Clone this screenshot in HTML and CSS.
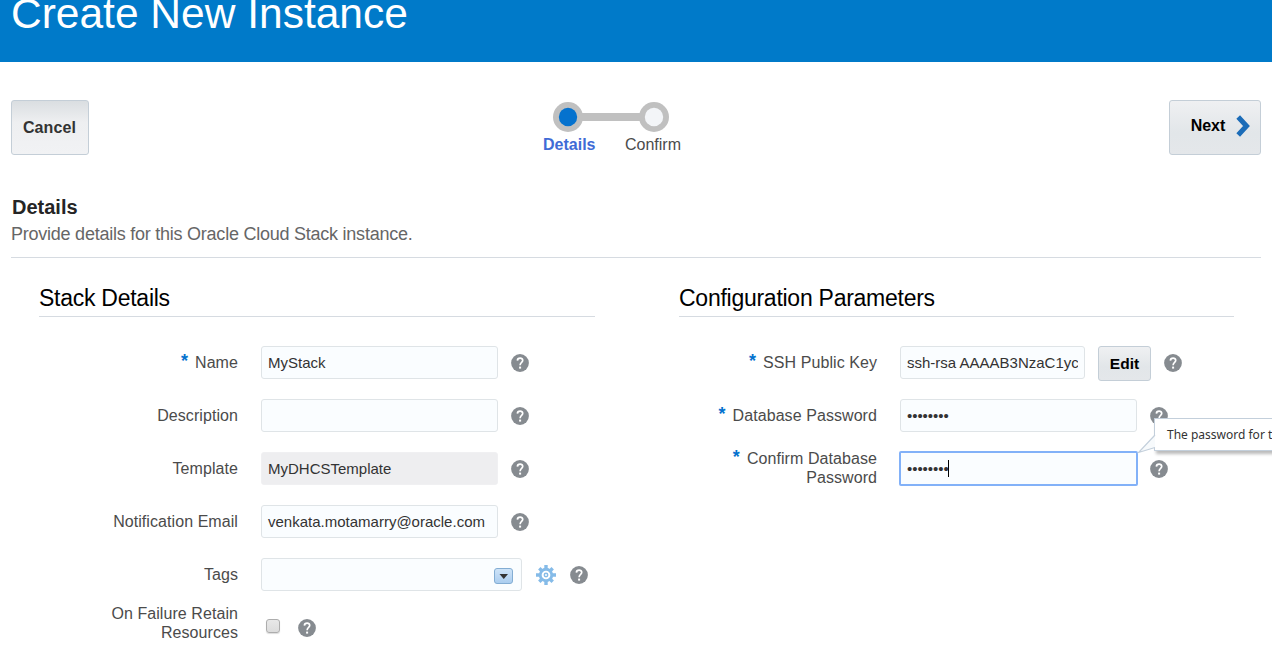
FILE: index.html
```html
<!DOCTYPE html>
<html lang="en">
<head>
<meta charset="utf-8">
<title>Create New Instance</title>
<link rel="stylesheet" href="styles.css">
</head>
<body>
<svg class="defs" aria-hidden="true">
  <symbol id="help" viewBox="0 0 18 18">
    <circle cx="9" cy="9" r="8.9" fill="#868b90"/>
    <path d="M6.4 6.6C6.5 3.3 11.9 3.4 11.7 6.5C11.6 8.4 9.2 8.4 9.1 11.2" fill="none" stroke="#fff" stroke-width="1.7"/>
    <rect x="8.1" y="12.6" width="2" height="2" fill="#fff"/>
  </symbol>
</svg>
<header class="banner"><h1 class="banner-title">Create New Instance</h1></header>
<main class="page">
  <nav class="toolbar">
    <button class="btn cancel">Cancel</button>
    <div class="train">
      <svg class="train-track" width="116" height="30" viewBox="0 0 116 30">
        <path d="M15 15H101" stroke="#c0c0c0" stroke-width="8"/>
        <circle cx="15" cy="15" r="15" fill="#c0c0c0"/>
        <circle cx="101" cy="15" r="15" fill="#c0c0c0"/>
        <circle cx="15" cy="15" r="9.2" fill="#0572ce"/>
        <circle cx="101" cy="15" r="9.2" fill="#f3f5f8"/>
      </svg>
      <div class="train-labels"><span class="step-active">Details</span><span class="step">Confirm</span></div>
    </div>
    <button class="btn next">Next
      <svg width="14" height="22" viewBox="0 0 14 22"><path d="M2.2 2L10.5 11L2.2 20" fill="none" stroke="#1b6cb8" stroke-width="5"/></svg>
    </button>
  </nav>
  <section class="intro">
    <h2 class="intro-title">Details</h2>
    <p class="intro-text">Provide details for this Oracle Cloud Stack instance.</p>
  </section>
  <div class="columns">
    <section class="panel">
      <h3 class="panel-title">Stack Details</h3>
      <div class="row"><div class="label"><span class="req">*</span>Name</div><div class="field">MyStack</div><svg class="help"><use href="#help"/></svg></div>
      <div class="row"><div class="label">Description</div><div class="field"></div><svg class="help"><use href="#help"/></svg></div>
      <div class="row"><div class="label">Template</div><div class="field readonly">MyDHCSTemplate</div><svg class="help"><use href="#help"/></svg></div>
      <div class="row"><div class="label">Notification Email</div><div class="field">venkata.motamarry@oracle.com</div><svg class="help"><use href="#help"/></svg></div>
      <div class="row"><div class="label">Tags</div><div class="field tags">
          <svg class="drop" width="19" height="16" viewBox="0 0 19 16">
            <defs><linearGradient id="dropfill" x2="0" y2="1"><stop stop-color="#cfe4f8"/><stop offset="1" stop-color="#aacdef"/></linearGradient></defs>
            <rect x=".5" y=".5" width="18" height="15" rx="2.5" fill="url(#dropfill)" stroke="#83add3"/>
            <path d="M5.5 6H14L9.75 11Z" fill="#333"/>
          </svg></div>
        <svg class="gear" width="20" height="20" viewBox="-10 -10 20 20">
          <g stroke="#85bbe8" stroke-width="3.4"><path d="M0-10V10M-10 0H10M-6.7-6.7L6.7 6.7M6.7-6.7L-6.7 6.7"/></g>
          <circle r="7.2" fill="#85bbe8"/><circle r="3.4" fill="#85bbe8" stroke="#fff" stroke-width="1.9"/><circle r="1" fill="#fff"/>
        </svg>
        <svg class="help"><use href="#help"/></svg></div>
      <div class="row row-check"><div class="label two-line">On Failure Retain<br>Resources</div><span class="checkbox"></span><svg class="help help-check"><use href="#help"/></svg></div>
    </section>
    <section class="panel config">
      <h3 class="panel-title">Configuration Parameters</h3>
      <div class="row"><div class="label"><span class="req">*</span>SSH Public Key</div><div class="field key"><span class="clip">ssh-rsa AAAAB3NzaC1yc</span></div><button class="btn edit">Edit</button><svg class="help"><use href="#help"/></svg></div>
      <div class="row"><div class="label"><span class="req">*</span>Database Password</div><div class="field"><span class="dots">••••••••</span></div><svg class="help"><use href="#help"/></svg></div>
      <div class="row"><div class="label two-line"><span class="req">*</span>Confirm Database<br>Password</div><div class="field focused"><span class="dots">••••••••</span><i class="caret"></i>
          <div class="tooltip">The password for the
            <svg class="tip" width="20" height="36" viewBox="0 0 20 36"><path d="M18 16L1.5 33.5L18 28.5" fill="#f7fafc" stroke="#c3cfdb" stroke-width="1.2"/></svg>
          </div></div><svg class="help"><use href="#help"/></svg></div>
    </section>
  </div>
</main>
</body>
</html>
```
FILE: styles.css
```css
* { box-sizing: border-box; }
body {
  margin: 0;
  height: 657px;
  overflow: hidden;
  background: #fff;
  color: #4b4b4b;
  font-family: "Liberation Sans", Arial, sans-serif;
  font-size: 16px;
}
h1, h2, h3, p { margin: 0; font-weight: normal; }
.defs { display: none; }
.banner { height: 62px; background: #007ac9; overflow: hidden; }
.banner-title { margin-top: -11px; padding-left: 11px; color: #fff; font-size: 42.5px; line-height: 50px; white-space: nowrap; }
.page { padding: 38px 11px 0; }
.toolbar { display: flex; align-items: flex-start; height: 90px; }
.btn {
  display: flex;
  align-items: center;
  justify-content: center;
  flex: none;
  padding: 0;
  border: 1px solid #c4ced7;
  border-radius: 3px;
  background: linear-gradient(#eff0f2, #e2e6e9 60%, #e4e7ea);
  color: #000;
  font: bold 16px "Liberation Sans", Arial, sans-serif;
}
.cancel { width: 78px; height: 55px; padding-right: 1px; background: linear-gradient(#dadee1, #eeeff1 40%, #f1f2f4); color: #333; letter-spacing: .1px; }
.next { width: 92px; height: 55px; gap: 11px; margin-left: auto; padding: 0 0 4px 11px; }
.next svg { flex: none; }
.train { width: 138px; margin-left: 454px; padding-top: 2px; }
.train-track { display: block; margin-left: 10px; }
.train-labels { display: flex; justify-content: space-between; line-height: 18px; padding-top: 4px; }
.step-active { color: #3f6bd6; font-weight: bold; }
.intro { width: 1250px; height: 68px; border-bottom: 1px solid #d6dbe1; padding-top: 6px; }
.intro-title { padding-left: 1px; color: #252525; font-size: 20px; line-height: 23px; font-weight: bold; }
.intro-text { padding-top: 4px; color: #666; font-size: 18px; line-height: 22px; letter-spacing: -.24px; }
.columns { display: grid; grid-template-columns: 556px 556px; column-gap: 84px; padding: 25px 0 0 28px; }
.panel-title { height: 34px; margin-bottom: 19px; border-bottom: 1px solid #d6dbe1; color: #000; font-size: 23px; line-height: 31px; letter-spacing: -.26px; }
.row { display: flex; align-items: center; height: 53px; }
.label { flex: none; width: 199px; margin-right: 23px; text-align: right; line-height: 19px; letter-spacing: .07px; }
.two-line { padding-bottom: 2px; }
.config .panel-title { width: 555px; }
.config .label { width: 198px; }
.req { color: #0572ce; font-size: 18px; font-weight: bold; line-height: 10px; margin-right: 7px; vertical-align: 1px; }
.field {
  position: relative;
  display: flex;
  align-items: center;
  flex: none;
  width: 237px;
  height: 33px;
  padding: 0 6px;
  border: 1px solid #dfe4e7;
  border-radius: 3px;
  background: #fafdff;
  color: #333;
  font-size: 15px;
  white-space: nowrap;
}
.readonly { background: #eeeef0; border-color: #f0f0f2; }
.help { flex: none; width: 18px; height: 18px; margin: 1px 0 0 13px; }
.tags { width: 261px; justify-content: flex-end; padding: 2px 8px 0 0; }
.gear { margin: 1px 0 0 14px; }
.gear + .help { margin-left: 14px; }
.row-check { height: 45px; }
.checkbox { width: 14px; height: 14px; margin: 5px 0 0 5px; border: 1px solid #adadad; border-radius: 3px; background: linear-gradient(#e8e8e8, #dcdcdc); box-shadow: 0 1px 1px #ddd; }
.help-check { margin: 9px 0 0 18px; }
.key { width: 185px; }
.clip { overflow: hidden; }
.edit { width: 53px; height: 35px; margin: 2px 0 0 13px; font-size: 15.5px; }
.dots { letter-spacing: -.05px; }
.focused { width: 239px; height: 35px; margin: 0 -1px; border: 2px solid #82b1f8; border-radius: 2px; }
.caret { width: 1px; height: 17px; margin-left: -1px; background: #000; }
.tooltip {
  position: absolute;
  left: 253px;
  top: -35px;
  width: 140px;
  height: 33px;
  padding-left: 12px;
  border: 1px solid #c3cfdb;
  background: #fff;
  box-shadow: 2px 3px 3px #bbb;
  color: #333;
  font: 12px/31px "Noto Sans", sans-serif;
}
.tip { position: absolute; left: -18px; top: 0; }
```
